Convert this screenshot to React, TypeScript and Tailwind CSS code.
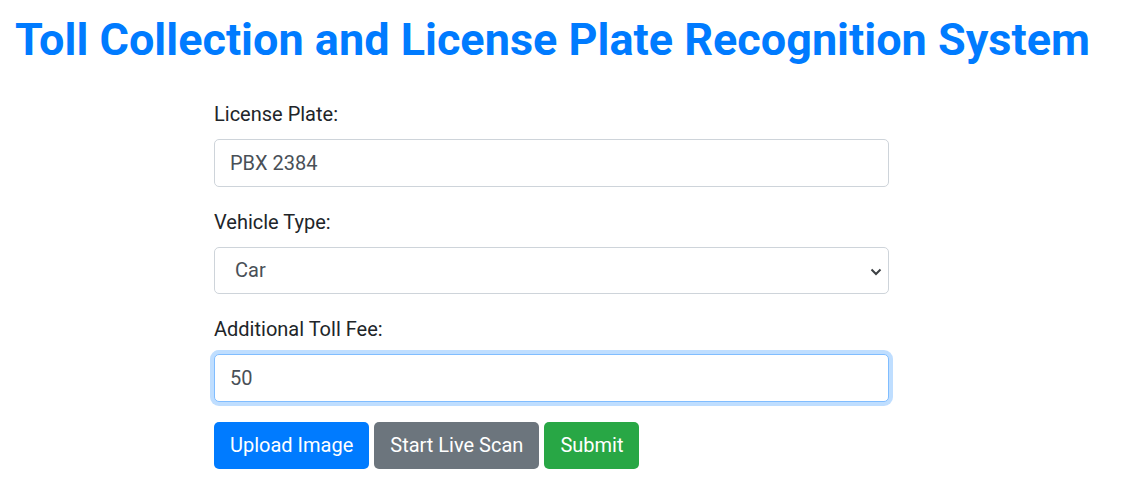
import React from "react";

export default function App() {
  const font = { fontFamily: "Roboto, 'Liberation Sans', sans-serif" };
  return (
    <div className="min-h-[502px] w-full bg-white" style={font}>
      <h1 className="whitespace-nowrap pt-[13px] pl-[15px] text-[45px] font-bold leading-[1.2] text-[#007bff]">
        Toll Collection and License Plate Recognition System
      </h1>
      <form className="ml-[214px] mt-[32px] w-[675px] text-[20px] leading-[1.5] text-[#212529]">
        <div className="mb-[20px]">
          <label className="mb-[10px] block">License Plate:</label>
          <input
            type="text"
            defaultValue="PBX 2384"
            className="block h-[47.5px] w-full rounded-[5px] border border-[#ced4da] bg-white px-[15px] py-[7.5px] text-[20px] text-[#495057] outline-none"
          />
        </div>
        <div className="mb-[20px]">
          <label className="mb-[10px] block">Vehicle Type:</label>
          <div className="relative">
            <select
              defaultValue="Car"
              className="block h-[47.5px] w-full appearance-none rounded-[5px] border border-[#ced4da] bg-white pl-[20px] pr-[15px] text-[20px] text-[#495057] outline-none"
            >
              <option>Car</option>
              <option>Truck</option>
              <option>Motorcycle</option>
            </select>
            <svg
              className="pointer-events-none absolute right-[7px] top-[21px]"
              width="12"
              height="8"
              viewBox="0 0 12 8"
            >
              <path d="M1.5 1.5 L6 6 L10.5 1.5" fill="none" stroke="#3c4043" strokeWidth="2" />
            </svg>
          </div>
        </div>
        <div className="mb-[20px]">
          <label className="mb-[10px] block">Additional Toll Fee:</label>
          <input
            type="text"
            defaultValue="50"
            className="block h-[47.5px] w-full rounded-[5px] border border-[#80bdff] bg-white px-[15px] py-[7.5px] text-[20px] text-[#495057] shadow-[0_0_0_4px_rgba(0,123,255,0.25)] outline-none"
          />
        </div>
        <div className="flex gap-[5px]">
          <button type="button" className="h-[47.5px] rounded-[5px] bg-[#007bff] px-[16px] text-[20px] text-white">
            Upload Image
          </button>
          <button type="button" className="h-[47.5px] rounded-[5px] bg-[#6c757d] px-[16px] text-[20px] text-white">
            Start Live Scan
          </button>
          <button type="button" className="h-[47.5px] rounded-[5px] bg-[#28a745] px-[16px] text-[20px] text-white">
            Submit
          </button>
        </div>
      </form>
    </div>
  );
}
